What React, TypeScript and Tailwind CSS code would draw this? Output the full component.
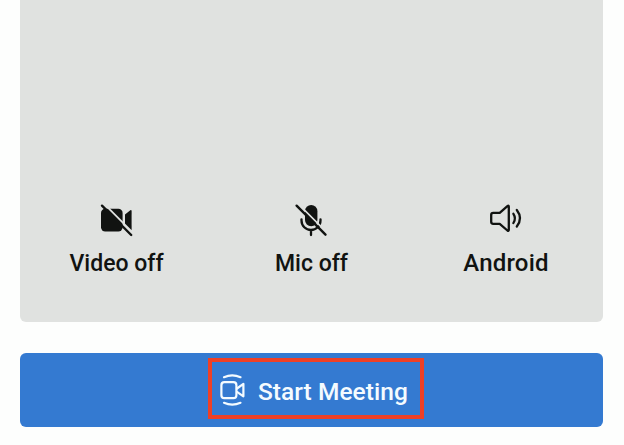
import type { ReactNode } from "react";

const ink = "#111311";
const panel = "#e0e2e0";

function VideoOffIcon() {
  return (
    <svg className="size-10" viewBox="96 199 40 40" fill="none">
      <rect x="101" y="208.7" width="21.6" height="22.8" rx="4.2" fill={ink} />
      <path d="M125 214.6L130.3 210.2Q131.6 209.4 131.6 211V229.3Q131.6 231 130.3 230L125 225.6Z" fill={ink} />
      <path d="M104.2 203.9L134 233.8" stroke={panel} strokeWidth="1.8" />
      <path d="M102 205.7L131.2 235" stroke={ink} strokeWidth="2.4" strokeLinecap="round" />
    </svg>
  );
}

function MicOffIcon() {
  return (
    <svg className="size-10" viewBox="291 199 40 40" fill="none">
      <rect x="305" y="205" width="12.4" height="21.3" rx="6.2" fill={ink} />
      <path d="M301.5 219.3V220.5A9.5 9.5 0 0 0 320.5 220.5V219.3M311 230V235" stroke={ink} strokeWidth="2.3" strokeLinecap="round" />
      <path d="M299 204.6L322 227.6" stroke={panel} strokeWidth="1.6" />
      <path d="M296.6 205.7L325.5 234.7" stroke={ink} strokeWidth="2.4" strokeLinecap="round" />
    </svg>
  );
}

function SpeakerIcon() {
  return (
    <svg className="size-10" viewBox="486 199 40 40" fill="none" stroke={ink} strokeWidth="2.3" strokeLinecap="round" strokeLinejoin="round">
      <path d="M493.2 212.8H499.7L507.4 206.1Q508.8 205.2 508.8 206.8V229.8Q508.8 231.4 507.4 230.5L499.7 223.8H493.2Q491.2 223.8 491.2 221.8V214.8Q491.2 212.8 493.2 212.8Z" />
      <path d="M513.4 213.8Q516.4 218.3 513.4 223M516.8 210Q523.2 218.3 516.8 226.5" />
    </svg>
  );
}

function MeetingIcon() {
  return (
    <svg className="mt-0.5 h-10 w-8 shrink-0" viewBox="216 370 32 40" fill="none" stroke="#f4fbff" strokeWidth="2.2" strokeLinecap="round" strokeLinejoin="round">
      <rect x="221.4" y="382.2" width="15" height="16" rx="3" />
      <path d="M237 388.5L243.4 383.8V396.3L237 391.8" />
      <path d="M224 377.2Q232.2 373.5 240.5 377.2M224 402.8Q232.2 406.5 240.5 402.8" />
    </svg>
  );
}

function Control({ icon, children, large = false }: { icon: ReactNode; children: ReactNode; large?: boolean }) {
  return (
    <button className="flex flex-col items-center text-[#111311]">
      {icon}
      <span className={`whitespace-nowrap font-medium leading-8 ${large ? "mt-2 text-[24px] tracking-[0.2px]" : "mt-[9px] pl-px text-[23px] tracking-normal"}`}>
        {children}
      </span>
    </button>
  );
}

export default function App() {
  return (
    <main className="h-[445px] w-[624px] overflow-hidden bg-[#fdfefd] pl-[19.5px] font-['Roboto',sans-serif]">
      <section className="h-[321.5px] w-[583px] rounded-b-md bg-[#e0e2e0] pt-[199px]">
        <div className="-ml-px grid grid-cols-[195px_195px_195px] items-start">
          <Control icon={<VideoOffIcon />}>Video off</Control>
          <Control icon={<MicOffIcon />}>Mic off</Control>
          <Control icon={<SpeakerIcon />} large>Android</Control>
        </div>
      </section>
      <button className="mt-[31.5px] flex h-[74px] w-[583px] rounded-md bg-[#347ad1] pl-[188px] pt-[5px] text-left">
        <span className="flex h-[61px] w-[216px] items-center border-4 border-[#ee4026] pl-1">
          <MeetingIcon />
          <span className="ml-[10.5px] mt-1.5 whitespace-nowrap text-[24.5px] font-medium leading-8 tracking-[0.04px] text-[#f4fbff]">Start Meeting</span>
        </span>
      </button>
    </main>
  );
}
